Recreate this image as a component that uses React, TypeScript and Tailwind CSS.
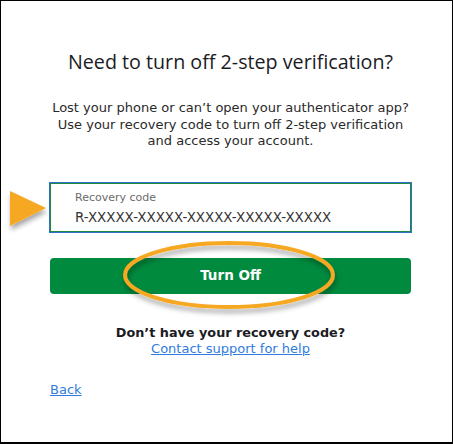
export default function App() {
  return (
    <div className="relative w-[453px] h-[444px] bg-white border-l border-t border-r border-b-2 border-black overflow-hidden [font-family:'DejaVu_Sans',Verdana,sans-serif]">
      <div className="pl-[48px] pr-[40px] flex flex-col">
        <h1 className="mt-[49px] text-center text-[19.7px] leading-[24px] font-medium text-[#1b1b24] [font-family:'Open_Sans',sans-serif]">
          Need to turn off 2-step verification?
        </h1>
        <p className="mt-[26px] text-center text-[13px] leading-[16.5px] text-[#2a2a2a]">
          Lost your phone or can’t open your authenticator app?
          <br />
          Use your recovery code to turn off 2-step verification
          <br />
          and access your account.
        </p>

        <div className="mt-[32px] h-[51px] border border-[#2f72c7] shadow-[inset_0_0_0_1px_#1f8a3f] px-[25px] pt-[8px]">
          <div className="text-[11px] leading-[14px] text-[#6b6b6b]">Recovery code</div>
          <div className="mt-[4px] text-[13.4px] leading-[18px] text-[#333]">R-XXXXX-XXXXX-XXXXX-XXXXX-XXXXX</div>
        </div>

        <button className="mt-[25px] mx-[1px] h-[36px] rounded-[4px] bg-[#008a3e] text-white font-bold text-[13.5px]">
          Turn Off
        </button>

        <div className="mt-[31px] text-center text-[12.8px] leading-[16px] font-bold text-[#1b1b24]">
          Don’t have your recovery code?
        </div>
        <a href="#" className="self-center text-[13px] leading-[16px] text-[#2f7be0] underline">
          Contact support for help
        </a>

        <a href="#" className="mt-[25px] self-start ml-[1px] text-[13px] leading-[16px] text-[#2f7be0] underline">
          Back
        </a>
      </div>

      <svg className="absolute left-0 top-0 pointer-events-none" width="453" height="444">
        <defs>
          <filter id="sh" x="-20%" y="-20%" width="140%" height="160%">
            <feDropShadow dx="1" dy="4" stdDeviation="2.5" floodColor="#000" floodOpacity="0.35" />
          </filter>
        </defs>
        <polygon points="9,190 45,207 9,225" fill="#f7a823" filter="url(#sh)" />
        <ellipse cx="228" cy="274" rx="104" ry="32" fill="none" stroke="#f7a823" strokeWidth="4" filter="url(#sh)" />
      </svg>
    </div>
  );
}
